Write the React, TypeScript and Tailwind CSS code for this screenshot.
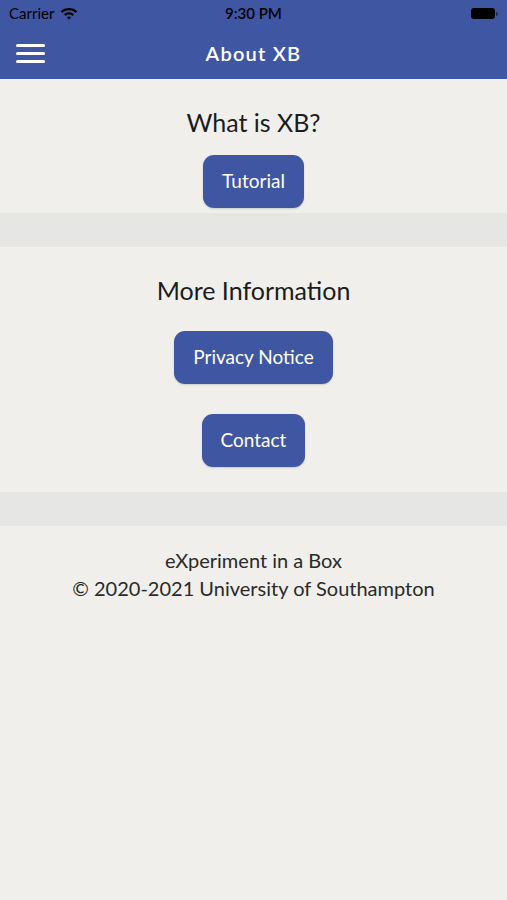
import React from "react";

const Button: React.FC<{ label: string; className?: string }> = ({ label, className }) => (
  <button
    className={`bg-[#3f56a3] text-white text-[19px] h-[53px] px-[19px] rounded-[11px] shadow-[0_1px_2px_rgba(0,0,0,0.15)] ${className ?? ""}`}
  >
    {label}
  </button>
);

const StatusBar: React.FC = () => (
  <div className="h-[27px] flex items-center justify-between px-[9px] text-black text-[15px] relative">
    <div className="flex items-center gap-[6px]">
      <span>Carrier</span>
      <svg width="18" height="13" viewBox="0 0 18 13" fill="black">
        <path d="M9 1C5.8 1 3 2.2 0.8 4.2L2.4 5.9C4.1 4.3 6.4 3.3 9 3.3s4.9 1 6.6 2.6l1.6-1.7C15 2.2 12.2 1 9 1z" />
        <path d="M9 5.2c-2 0-3.7 0.8-5 2l1.6 1.7C6.5 8 7.7 7.5 9 7.5s2.5 0.5 3.4 1.4L14 7.2c-1.3-1.2-3-2-5-2z" />
        <path d="M9 9.4c-0.9 0-1.6 0.3-2.2 0.9L9 12.6l2.2-2.3C10.6 9.7 9.9 9.4 9 9.4z" />
      </svg>
    </div>
    <span className="absolute left-1/2 -translate-x-1/2 font-semibold">9:30 PM</span>
    <div className="flex items-center">
      <div className="w-[24px] h-[11px] rounded-[3px] bg-black" />
      <div className="w-[2px] h-[4px] bg-black/50 rounded-r-sm ml-[1px]" />
    </div>
  </div>
);

export default function App() {
  return (
    <div className="w-[507px] min-h-[900px] bg-[#f0efeb] font-['Lato','Noto_Sans',sans-serif] text-[#1c1c1c]">
      <header className="bg-[#3f56a3] h-[79px] flex flex-col">
        <StatusBar />
        <div className="flex-1 flex items-center relative">
          <div className="absolute left-[16px] flex flex-col gap-[5px]">
            <span className="block w-[29px] h-[3px] bg-white rounded-full" />
            <span className="block w-[29px] h-[3px] bg-white rounded-full" />
            <span className="block w-[29px] h-[3px] bg-white rounded-full" />
          </div>
          <h1 className="w-full text-center text-white text-[20px] font-semibold tracking-[1.2px]">About XB</h1>
        </div>
      </header>

      {/* What is XB */}
      <section className="h-[134px] flex flex-col items-center pt-[27px]">
        <h2 className="text-[25px] leading-[32px]">What is XB?</h2>
        <Button label="Tutorial" className="mt-[17px]" />
      </section>

      <div className="h-[34px] bg-[#e6e6e4]" />

      {/* More info */}
      <section className="h-[245px] flex flex-col items-center pt-[27px]">
        <h2 className="text-[25px] leading-[32px]">More Information</h2>
        <Button label="Privacy Notice" className="mt-[25px]" />
        <Button label="Contact" className="mt-[30px]" />
      </section>

      <div className="h-[34px] bg-[#e6e6e4]" />

      <footer className="pt-[20px] text-center text-[20px] leading-[28px] text-[#2a2a2a]">
        <p>eXperiment in a Box</p>
        <p>© 2020-2021 University of Southampton</p>
      </footer>
    </div>
  );
}
